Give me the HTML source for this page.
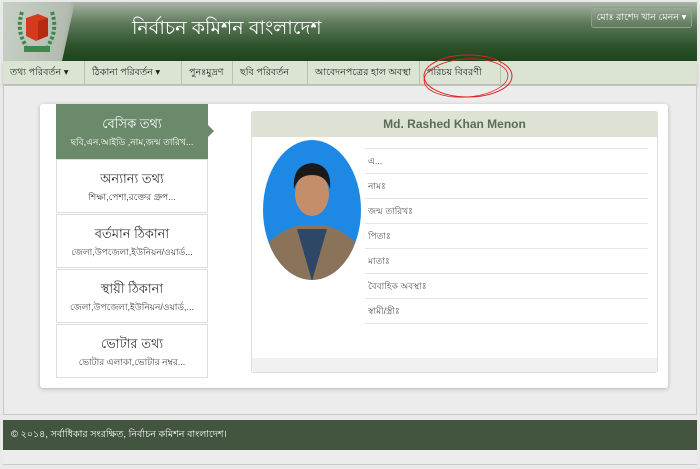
<!DOCTYPE html>
<html><head><meta charset="utf-8"><style>
*{box-sizing:border-box;margin:0;padding:0}
body{width:700px;height:469px;background:#e9e9e9;font-family:"Liberation Sans","Noto Sans CJK SC",sans-serif;position:relative;overflow:hidden}
.abs{position:absolute}
.hdr{left:3px;top:2px;width:694px;height:59px;background:linear-gradient(#a9b5a6 0%,#5f7a5c 35%,#2c522a 75%,#1d451c 100%)}
.logo{left:3px;top:2px;width:72px;height:59px;background:linear-gradient(100deg,#c9d0c7 0%,#b3bcb0 80%,#8c9a88 100%);clip-path:polygon(0 0,100% 0,82% 100%,0 100%)}
.title{left:132px;top:14px;color:#fff;font-size:19px}
.btn{left:591px;top:7px;width:101px;height:21px;border:1px solid #8fa38c;border-radius:3px;color:#fff;font-size:9.5px;line-height:19px;text-align:center;background:rgba(255,255,255,.06)}
.nav{left:3px;top:61px;width:694px;height:24px;background:#dbe3d3;border-bottom:1px solid #b8c0b2;box-shadow:0 2px 3px rgba(0,0,0,.2)}
.nav span{position:absolute;top:0;height:24px;line-height:24px;font-size:9.5px;color:#222;border-right:1px solid #b9c1b3;padding-left:7px;white-space:nowrap;overflow:hidden}
.main{left:3px;top:86px;width:694px;height:329px;background:#ececec;border:1px solid #c9c9c9;border-top:none}
.panel{left:40px;top:104px;width:628px;height:284px;background:#fff;box-shadow:0 1px 4px rgba(0,0,0,.25);border-radius:3px}
.side{left:56px;width:152px;height:54px;background:#fff;border:1px solid #ddd;text-align:center;color:#333}
.side b{display:block;font-weight:normal;font-size:13px;margin-top:11px;line-height:16px}
.side i{display:block;font-style:normal;font-size:9px;margin-top:4px;line-height:12px;color:#444}
.act{background:#6b8a6b;color:#fff;border-color:#6b8a6b}
.act i{color:#fff}
.card{left:251px;top:111px;width:407px;height:262px;border:1px solid #ddd;border-radius:3px;background:#fff}
.ch{left:251px;top:111px;width:407px;height:26px;background:#dde2d5;color:#5a6d55;font-weight:bold;font-size:12px;text-align:center;line-height:26px;border-radius:3px 3px 0 0}
.cf{left:252px;top:358px;width:405px;height:14px;background:#f1f1f1}
.row{left:365px;width:283px;height:25px;border-top:1px solid #e3e3e3;font-size:9px;color:#555;line-height:24px;padding-left:3px}
.foot{left:3px;top:420px;width:694px;height:30px;background:#44553f;color:#fff;font-size:9.5px;line-height:30px;padding-left:8px}
.fb{left:3px;top:450px;width:694px;height:15px;background:#ececec;border-bottom:1px solid #c9c9c9}
</style></head><body>
<div class="abs hdr"></div>
<div class="abs logo"></div>
<svg class="abs" style="left:14px;top:4px" width="46" height="52" viewBox="0 0 46 52">
<path d="M8 8 Q2 26 12 42" stroke="#3c8a4a" stroke-width="4" fill="none" stroke-dasharray="3 2"/>
<path d="M38 8 Q44 26 34 42" stroke="#3c8a4a" stroke-width="4" fill="none" stroke-dasharray="3 2"/>
<polygon points="12,14 24,10 34,14 34,32 22,37 12,32" fill="#d63a1c"/>
<polygon points="24,17 34,14 34,32 24,36" fill="#b52a10"/>
<rect x="10" y="42" width="26" height="6" fill="#3c8a4a"/>
</svg>
<div class="abs title">নির্বাচন কমিশন বাংলাদেশ</div>
<div class="abs btn">মোঃ রাশেদ খান মেনন ▾</div>
<div class="abs nav">
<span style="left:0;width:82px">তথ্য পরিবর্তন ▾</span>
<span style="left:82px;width:97px">ঠিকানা পরিবর্তন ▾</span>
<span style="left:179px;width:51px">পুনঃমুদ্রণ</span>
<span style="left:230px;width:75px">ছবি পরিবর্তন</span>
<span style="left:305px;width:112px">আবেদনপত্রের হাল অবস্থা</span>
<span style="left:417px;width:81px">পরিচয় বিবরণী</span>
</div>
<div class="abs main"></div>
<div class="abs panel"></div>
<div class="abs side act" style="top:104px;height:55px"><b>বেসিক তথ্য</b><i>ছবি,এন.আইডি ,নাম,জন্ম তারিখ...</i></div>
<div class="abs" style="left:208px;top:125px;width:0;height:0;border-top:6px solid transparent;border-bottom:6px solid transparent;border-left:6px solid #6b8a6b"></div>
<div class="abs side" style="top:159px"><b>অন্যান্য তথ্য</b><i>শিক্ষা,পেশা,রক্তের গ্রুপ...</i></div>
<div class="abs side" style="top:214px"><b>বর্তমান ঠিকানা</b><i>জেলা,উপজেলা,ইউনিয়ন/ওয়ার্ড...</i></div>
<div class="abs side" style="top:269px"><b>স্থায়ী ঠিকানা</b><i>জেলা,উপজেলা,ইউনিয়ন/ওয়ার্ড,...</i></div>
<div class="abs side" style="top:324px"><b>ভোটার তথ্য</b><i>ভোটার এলাকা,ভোটার নম্বর...</i></div>
<div class="abs card"></div>
<div class="abs ch">Md. Rashed Khan Menon</div>
<div class="abs cf"></div>
<svg class="abs" style="left:262px;top:139px" width="100" height="142" viewBox="0 0 100 142">
<defs><clipPath id="c"><ellipse cx="50" cy="71" rx="49" ry="70"/></clipPath></defs>
<ellipse cx="50" cy="71" rx="49" ry="70" fill="#1e88e5"/>
<g clip-path="url(#c)">
<path d="M0 142 L5 105 Q20 90 38 86 L62 86 Q80 90 95 105 L100 142Z" fill="#8a7358"/>
<path d="M35 90 L50 142 L65 90 Z" fill="#2f4766"/>
<ellipse cx="50" cy="55" rx="17" ry="22" fill="#c58e6b"/>
<path d="M32 50 Q30 26 50 24 Q70 26 68 50 Q64 36 50 36 Q36 36 32 50Z" fill="#1a1a1a"/>
</g></svg>
<div class="abs row" style="top:148px">এ...</div>
<div class="abs row" style="top:173px">নামঃ</div>
<div class="abs row" style="top:198px">জন্ম তারিখঃ</div>
<div class="abs row" style="top:223px">পিতাঃ</div>
<div class="abs row" style="top:248px">মাতাঃ</div>
<div class="abs row" style="top:273px">বৈবাহিক অবস্থাঃ</div>
<div class="abs row" style="top:298px">স্বামী/স্ত্রীঃ</div>
<div class="abs row" style="top:323px;height:1px"></div>
<svg class="abs" style="left:420px;top:52px" width="96" height="50" viewBox="0 0 96 50"><ellipse cx="48" cy="24" rx="44" ry="21" fill="none" stroke="#d22" stroke-width="1"/><ellipse cx="46" cy="26" rx="42" ry="19" fill="none" stroke="#d22" stroke-width="0.8" transform="rotate(-4 46 26)"/></svg>
<div class="abs foot">© ২০১৪, সর্বাধিকার সংরক্ষিত, নির্বাচন কমিশন বাংলাদেশ।</div>
<div class="abs fb"></div>
</body></html>
